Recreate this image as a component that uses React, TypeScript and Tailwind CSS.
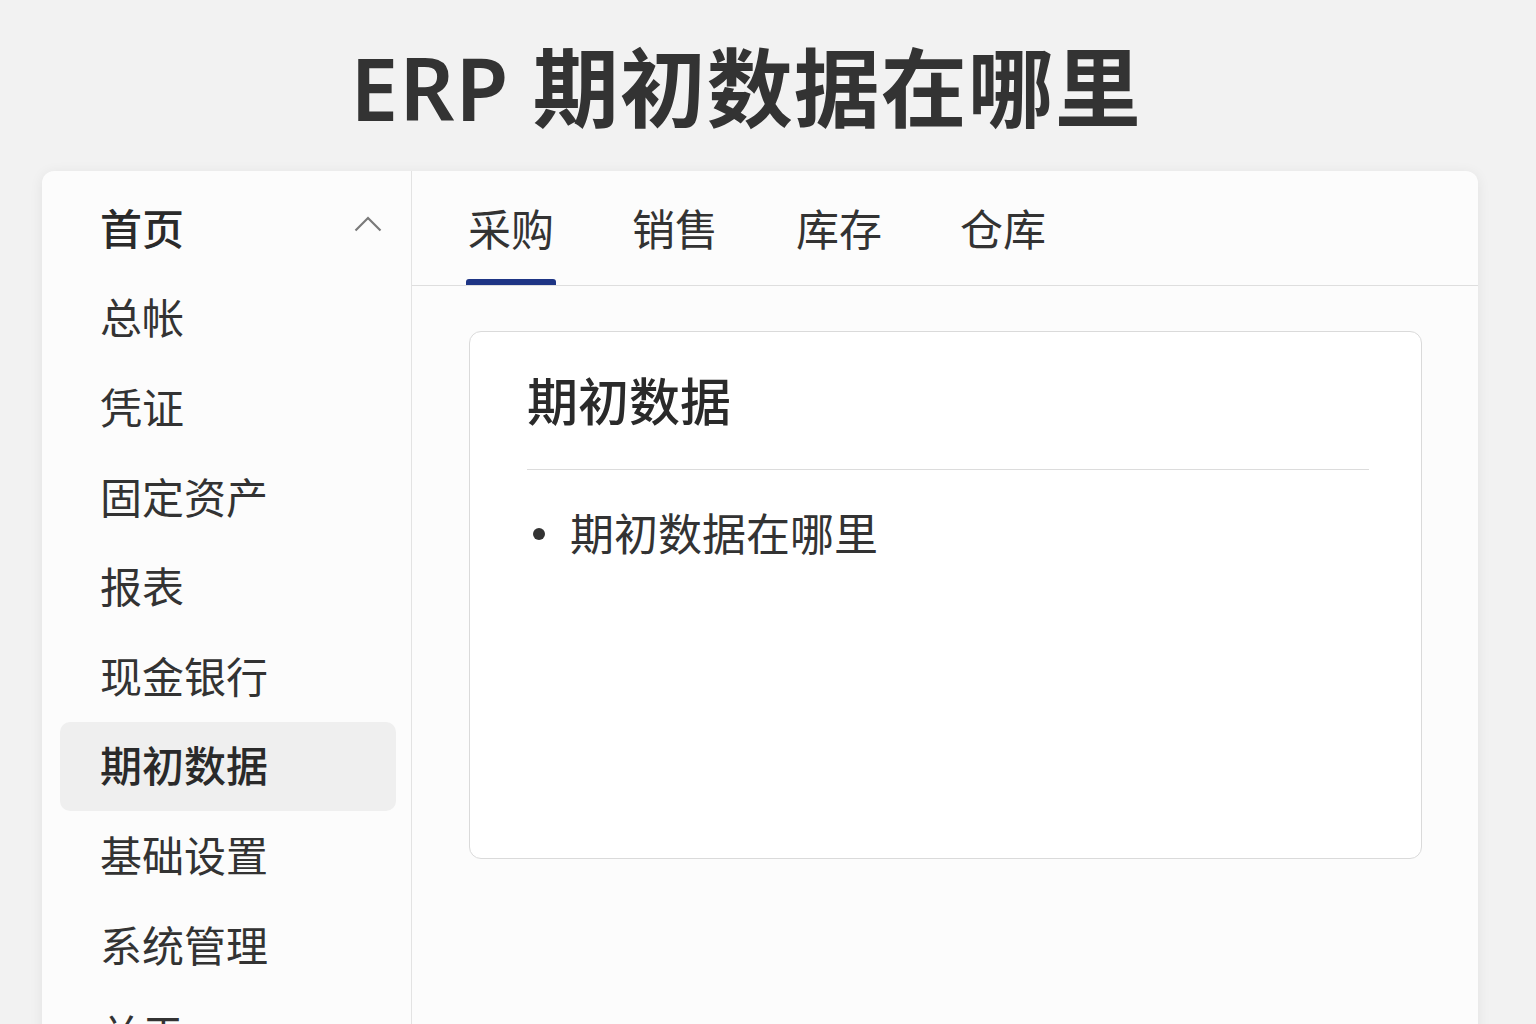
import React from "react";

const FONT = { fontFamily: '"Noto Sans", "Noto Sans CJK SC", sans-serif' };

const menu = ["首页", "总帐", "凭证", "固定资产", "报表", "现金银行", "期初数据", "基础设置", "系统管理", "关于"];
const tabs = ["采购", "销售", "库存", "仓库"];

export default function App() {
  return (
    <div className="w-[1536px] h-[1024px] overflow-hidden bg-[#f2f2f2] text-[#2e2e2e]" style={FONT}>
      <div className="h-[171px] flex items-center justify-center pt-[4px] pr-[44px]">
        <h1 className="text-[86px] leading-none font-semibold tracking-[1px] text-[#333333]">ERP 期初数据在哪里</h1>
      </div>
      <div className="ml-[42px] mr-[58px] h-[900px] bg-[#fcfcfc] rounded-[12px] shadow-[0_2px_14px_rgba(0,0,0,0.07)] flex overflow-hidden">
        <aside className="w-[370px] shrink-0 border-r border-[#e3e3e3] pt-[13px] pl-[18px] pr-[15px]">
          {menu.map((m, i) => (
            <div
              key={m}
              className={
                "h-[89.6px] flex items-center pl-[40px] pr-[14px] rounded-[10px] text-[42px] leading-none " +
                (i === 6 ? "bg-[#efefef] font-medium text-[#2a2a2a]" : i === 0 ? "font-medium text-[#2a2a2a]" : "text-[#333333]")
              }
            >
              <span className="flex-1">{m}</span>
              {i === 0 && (
                <svg width="28" height="16" viewBox="0 0 28 16" className="mt-[-10px]">
                  <polyline points="1.5,14.5 14,2 26.5,14.5" fill="none" stroke="#7a7a7a" strokeWidth="2.2" />
                </svg>
              )}
            </div>
          ))}
        </aside>
        <main className="flex-1 flex flex-col">
          <div className="h-[115px] border-b border-[#dedede] flex items-end pl-[54px] gap-[74px]">
            {tabs.map((t, i) => (
              <div key={t} className="flex flex-col items-center">
                <span className="text-[43px] leading-none text-[#333333] px-[2px]">{t}</span>
                <div className={"mt-[28px] h-[6px] w-[90px] rounded-t-[3px] " + (i === 0 ? "bg-[#1e3585]" : "bg-transparent")} />
              </div>
            ))}
          </div>
          <div className="pt-[45px] pl-[57px] pr-[56px]">
            <div className="h-[528px] bg-white border border-[#dadada] rounded-[12px] pl-[57px] pr-[52px] pt-[44px]">
              <h2 className="text-[51px] leading-none font-medium text-[#2a2a2a] pb-[42px] border-b border-[#dcdcdc]">期初数据</h2>
              <div className="flex items-center mt-[42px] text-[44px] leading-none text-[#333333]">
                <span className="w-[12px] h-[12px] rounded-full bg-[#333333] ml-[6px] mr-[25px]" />
                <span>期初数据在哪里</span>
              </div>
            </div>
          </div>
        </main>
      </div>
    </div>
  );
}
